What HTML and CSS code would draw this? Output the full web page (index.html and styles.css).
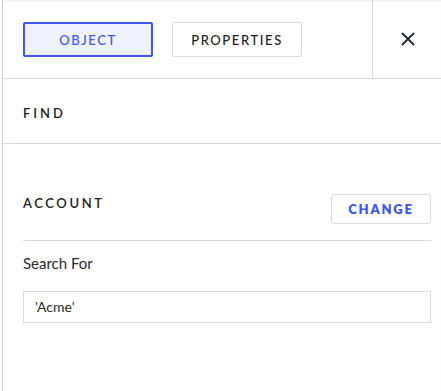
FILE: index.html
```html
<!DOCTYPE html>
<html>
<head>
<meta charset="utf-8">
<link rel="stylesheet" href="styles.css">
</head>
<body>
<div class="panel">
  <div class="header">
    <div class="tabs">
      <button class="tab tab-active">OBJECT</button>
      <button class="tab">PROPERTIES</button>
    </div>
    <div class="close">
      <svg width="14" height="14" viewBox="0 0 14 14"><path d="M1 1 L13 13 M13 1 L1 13" stroke="#1f2a37" stroke-width="1.8" fill="none"/></svg>
    </div>
  </div>
  <div class="find">FIND</div>
  <div class="account">
    <div class="account-row">
      <div class="label-caps">ACCOUNT</div>
      <button class="change">CHANGE</button>
    </div>
    <div class="field-label">Search For</div>
    <div class="input">'Acme'</div>
  </div>
</div>
</body>
</html>
```
FILE: styles.css
```css
* { box-sizing: border-box; }
html, body { margin: 0; padding: 0; background: #fff; }
body { font-family: Lato, "Open Sans", sans-serif; color: #2b2b2b; }
.panel {
  margin-left: 2px;
  border-left: 1px solid #c6d4e1;
  height: 391px;
  box-shadow: inset 0 2px 2px -1px #ececec;
}
.header {
  display: flex;
  height: 79px;
  border-bottom: 1px solid #dadbe6;
}
.tabs {
  flex: 1;
  display: flex;
  gap: 19px;
  padding: 22px 0 0 20px;
}
.tab {
  width: 130px;
  height: 35px;
  background: #fff;
  border: 1px solid #d9dae6;
  border-radius: 2px;
  font-family: Lato, sans-serif;
  font-size: 13px;
  font-weight: 500;
  letter-spacing: 1.6px;
  color: #222;
  padding: 0;
}
.tab-active {
  background: #eef1fe;
  border: 2px solid #3d55f5;
  color: #3d55f5;
}
.close {
  width: 69px;
  border-left: 1px solid #dadbe6;
  display: flex;
  align-items: center;
  justify-content: center;
  padding-left: 2px;
}
.find {
  height: 65px;
  border-bottom: 1px solid #dadbe6;
  padding: 24px 0 0 20px;
  font-size: 13px;
  font-weight: 600;
  letter-spacing: 3px;
  color: #222;
  line-height: 20px;
}
.account {
  padding: 51px 10px 0 20px;
}
.account-row {
  display: flex;
  justify-content: space-between;
  align-items: flex-start;
  border-bottom: 1px solid #dadbe6;
  height: 46px;
}
.label-caps {
  font-size: 13px;
  font-weight: 600;
  letter-spacing: 2.6px;
  color: #222;
  line-height: 20px;
  margin-top: -2px;
}
.change {
  width: 100px;
  height: 30px;
  margin-top: -1px;
  background: #fff;
  border: 1px solid #d9dae6;
  border-radius: 3px;
  font-family: Lato, sans-serif;
  font-size: 13px;
  font-weight: 800;
  letter-spacing: 1.8px;
  color: #3d55f5;
  padding: 0;
}
.field-label {
  margin-top: 12px;
  font-size: 15px;
  line-height: 20px;
  color: #2b2b2b;
}
.input {
  margin-top: 18px;
  height: 32px;
  border: 1px solid #d9dae6;
  padding: 0 11px;
  font-size: 14px;
  line-height: 30px;
  color: #2b2b2b;
}
```
